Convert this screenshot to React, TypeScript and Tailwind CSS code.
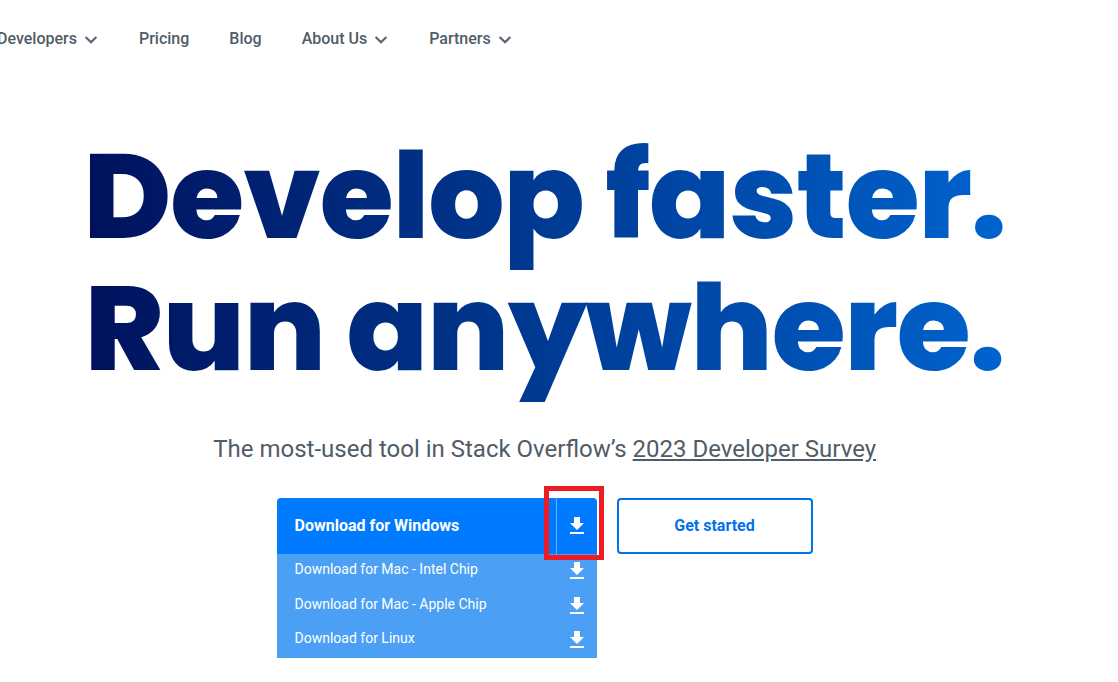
import { MdDownload } from "react-icons/md"

const navItems = [
  { label: "Developers", hasMenu: true },
  { label: "Pricing", hasMenu: false },
  { label: "Blog", hasMenu: false },
  { label: "About Us", hasMenu: true },
  { label: "Partners", hasMenu: true },
]

const otherDownloads = ["Download for Mac - Intel Chip", "Download for Mac - Apple Chip", "Download for Linux"]

function Chevron() {
  return (
    <svg viewBox="0 0 16 16" className="mt-0.5 h-4 w-4" fill="none" stroke="#566473" strokeWidth="2.2">
      <path d="M2.6 5 8 10.2 13.4 5" />
    </svg>
  )
}

export default function App() {
  return (
    <div className="h-[682px] w-full overflow-hidden bg-white font-['Roboto',sans-serif] text-[#505c67]">
      <nav className="-ml-[3px] flex h-[77px] items-center gap-10 text-base font-medium">
        {navItems.map((item) => (
          <a key={item.label} href="#" className="flex items-center gap-1.5 whitespace-nowrap">
            {item.label}
            {item.hasMenu && <Chevron />}
          </a>
        ))}
      </nav>

      <main>
        <h1 className="mt-[53px] ml-[80.5px] w-[928px] bg-gradient-to-r from-[#00115c] to-[#0064cf] bg-clip-text pb-3 text-center font-['Poppins','Inter',sans-serif] text-[120px] leading-[132px] font-extrabold tracking-[-0.01em] whitespace-nowrap text-transparent">
          Develop faster.
          <br />
          Run anywhere.
        </h1>

        <p className="mt-[25px] ml-[213.25px] text-2xl leading-9 whitespace-nowrap">
          The most-used tool in Stack Overflow’s{" "}
          <a href="#" className="underline">
            2023 Developer Survey
          </a>
        </p>

        <div className="mt-[31px] ml-[277px] flex items-start gap-5">
          <div className="w-80">
            <button className="relative flex h-14 w-full rounded-t bg-[#007bff] font-bold text-white">
              <span className="flex h-full flex-1 items-center pl-[17.5px]">Download for Windows</span>
              <span className="flex h-full w-[41px] items-center justify-center border-l border-white/40">
                <MdDownload className="h-6 w-6" />
              </span>
              <span className="absolute -top-3 left-[267px] h-[74px] w-[60px] border-[5px] border-[#ed1c24]" />
            </button>
            <ul className="h-[104px] bg-[#4ba0f5] text-sm text-white">
              {otherDownloads.map((label) => (
                <li key={label} className="flex h-[34.5px] items-center justify-between pr-2 pl-[17.5px]">
                  <span className="pb-1">{label}</span>
                  <MdDownload className="h-6 w-6" />
                </li>
              ))}
            </ul>
          </div>
          <button className="h-14 w-[196px] rounded border-2 border-[#0073ec] pr-px font-bold text-[#0073ec]">
            Get started
          </button>
        </div>
      </main>
    </div>
  )
}
